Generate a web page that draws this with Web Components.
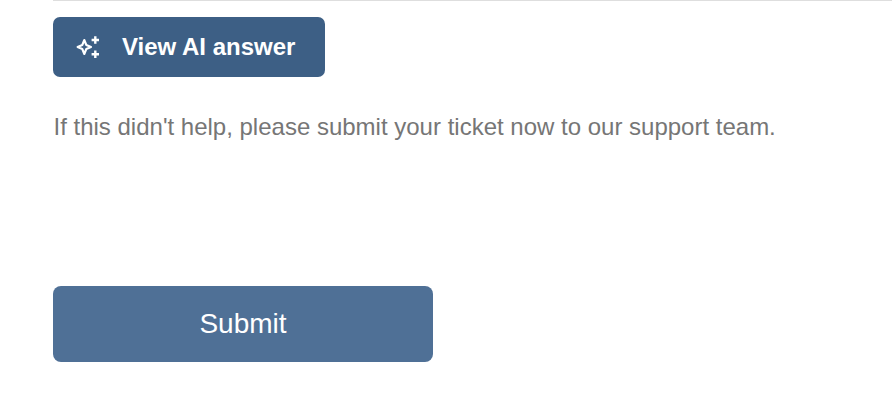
<!DOCTYPE html>
<html lang="en">
<head>
<meta charset="utf-8">
<title>Support</title>
<style>
  html, body { margin: 0; background: #fff; overflow: hidden; }
  body { font-family: "Liberation Sans", Arial, sans-serif; }
</style>
</head>
<body>
<support-panel>
  <ai-button>View AI answer</ai-button>
  <help-note>If this didn't help, please submit your ticket now to our support team.</help-note>
  <submit-button>Submit</submit-button>
</support-panel>

<script>
class SupportPanel extends HTMLElement {
  constructor() {
    super();
    this.attachShadow({ mode: 'open' });
    this.shadowRoot.innerHTML = `
      <style>
        :host {
          display: flex;
          flex-direction: column;
          align-items: flex-start;
          height: 416px;
          box-sizing: border-box;
          margin-left: 53px;
          padding-top: 16px;
          border-top: 1px solid #dedede;
        }
      </style>
      <slot></slot>
    `;
  }
}
customElements.define('support-panel', SupportPanel);

class AiButton extends HTMLElement {
  constructor() {
    super();
    this.attachShadow({ mode: 'open' });
    this.shadowRoot.innerHTML = `
      <style>
        :host {
          display: flex;
          align-items: center;
          box-sizing: border-box;
          width: 272px;
          height: 60px;
          padding-left: 23px;
          gap: 22px;
          background: #3d5f85;
          border-radius: 7px;
          color: #fff;
          font-size: 24px;
          font-weight: bold;
        }
        svg { width: 24px; height: 24px; flex: none; }
      </style>
      <svg viewBox="0 0 24 24" fill="none" aria-hidden="true">
        <path d="M8.3 5 L10.3 10 L15 12 L10.3 14 L8.3 19 L6.3 14 L1.6 12 L6.3 10 Z" stroke="#fff" stroke-width="2.1" stroke-linejoin="round"/>
        <path d="M19.3 1.3 V8.7 M15.6 5 H23 M19.3 15.6 V23 M15.6 19.3 H23" stroke="#fff" stroke-width="2.4"/>
      </svg>
      <slot></slot>
    `;
  }
}
customElements.define('ai-button', AiButton);

class HelpNote extends HTMLElement {
  constructor() {
    super();
    this.attachShadow({ mode: 'open' });
    this.shadowRoot.innerHTML = `
      <style>
        :host {
          display: block;
          margin-top: 36px;
          margin-left: 0.5px;
          color: #767676;
          font-size: 24px;
          line-height: 28px;
          white-space: nowrap;
        }
      </style>
      <slot></slot>
    `;
  }
}
customElements.define('help-note', HelpNote);

class SubmitButton extends HTMLElement {
  constructor() {
    super();
    this.attachShadow({ mode: 'open' });
    this.shadowRoot.innerHTML = `
      <style>
        :host {
          display: flex;
          align-items: center;
          justify-content: center;
          width: 380px;
          height: 76px;
          margin-top: 145px;
          background: #4f7096;
          border-radius: 8px;
          color: #fff;
          font-size: 28px;
        }
      </style>
      <slot></slot>
    `;
  }
}
customElements.define('submit-button', SubmitButton);
</script>
</body>
</html>
